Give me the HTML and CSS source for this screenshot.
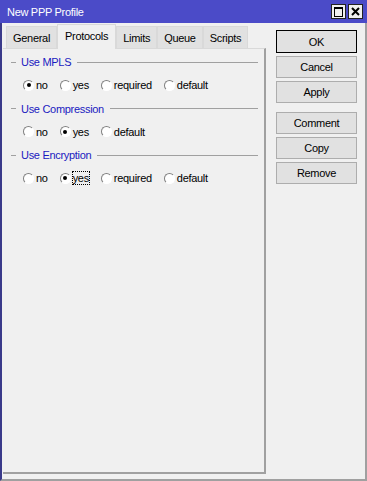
FILE: index.html
```html
<!DOCTYPE html>
<html lang="en">
<head>
<meta charset="UTF-8" />
<title>New PPP Profile</title>
<link rel="stylesheet" href="styles.css">
</head>
<body>
  <div class="window">
    <div class="titlebar">
      <span class="title">New PPP Profile</span>
      <div class="ctrls">
        <span class="ctrl"><span class="max-box"></span></span>
        <span class="ctrl">
          <svg width="9" height="9" viewBox="0 0 9 9"><path d="M1 1 L8 8 M8 1 L1 8" stroke="#000" stroke-width="2"/></svg>
        </span>
      </div>
    </div>

    <div class="content">
      <div class="main">
        <div class="tabs">
          <div class="tab">General</div>
          <div class="tab active">Protocols</div>
          <div class="tab">Limits</div>
          <div class="tab">Queue</div>
          <div class="tab">Scripts</div>
        </div>
        <div class="panel">
          <div class="group-head"><span class="dash"></span><span class="group-title">Use MPLS</span><span class="rule"></span></div>
          <div class="radios">
            <label class="radio"><span class="dot on"></span>no</label>
            <label class="radio"><span class="dot"></span>yes</label>
            <label class="radio"><span class="dot"></span>required</label>
            <label class="radio"><span class="dot"></span>default</label>
          </div>

          <div class="group-head"><span class="dash"></span><span class="group-title">Use Compression</span><span class="rule"></span></div>
          <div class="radios">
            <label class="radio"><span class="dot"></span>no</label>
            <label class="radio"><span class="dot on"></span>yes</label>
            <label class="radio"><span class="dot"></span>default</label>
          </div>

          <div class="group-head"><span class="dash"></span><span class="group-title">Use Encryption</span><span class="rule"></span></div>
          <div class="radios">
            <label class="radio"><span class="dot"></span>no</label>
            <label class="radio"><span class="dot on"></span><span class="focus">yes</span></label>
            <label class="radio"><span class="dot"></span>required</label>
            <label class="radio"><span class="dot"></span>default</label>
          </div>
        </div>
      </div>

      <div class="side">
        <button class="btn default">OK</button>
        <button class="btn">Cancel</button>
        <button class="btn">Apply</button>
        <button class="btn gap">Comment</button>
        <button class="btn">Copy</button>
        <button class="btn">Remove</button>
      </div>
    </div>
  </div>
</body>
</html>
```

FILE: styles.css
```css
body {
  margin: 0;
  font-family: 'Liberation Sans', Arial, sans-serif;
  font-size: 11px;
  letter-spacing: -0.3px;
  color: #000;
}
.window {
  width: 367px;
  height: 481px;
  box-sizing: border-box;
  background-color: #f0f0f0;
  border-left: 2px solid #3a3a8a;
  border-right: 2px solid #a0a0a0;
  border-bottom: 2px solid #a0a0a0;
  display: flex;
  flex-direction: column;
}
.titlebar {
  height: 23px;
  margin-left: -2px;
  margin-right: -2px;
  padding-left: 7px;
  padding-right: 4px;
  background-color: #4b4bc8;
  display: flex;
  align-items: center;
  justify-content: space-between;
}
.title {
  color: #fff;
  font-size: 11px;
}
.ctrls {
  display: flex;
  gap: 2px;
}
.ctrl {
  width: 13px;
  height: 13px;
  background-color: #f0f0f0;
  border: 1px solid #222;
  display: flex;
  align-items: center;
  justify-content: center;
}
.max-box {
  width: 7px;
  height: 7px;
  border: 1px solid #000;
  border-top-width: 2px;
}
.content {
  flex: 1;
  display: flex;
}
.main {
  width: 263px;
  display: flex;
  flex-direction: column;
  padding-left: 1px;
  padding-bottom: 5px;
}
.tabs {
  display: flex;
  padding-left: 3px;
  height: 25px;
  align-items: flex-end;
}
.tab {
  height: 22px;
  box-sizing: border-box;
  padding: 5px 6px 0 6px;
  background-color: #e1e1e1;
  border: 1px solid #d9d9d9;
  border-bottom: none;
}
.tab.active {
  height: 25px;
  padding: 5px 7px 0 7px;
  background-color: #f0f0f0;
  border-color: #d9d9d9;
  margin-bottom: -1px;
  position: relative;
  z-index: 1;
}
.panel {
  flex: 1;
  border-right: 2px solid #a0a0a0;
  border-bottom: 2px solid #a0a0a0;
  border-top: 1px solid #d9d9d9;
  padding: 4px 6px 0 6px;
}
.group-head {
  display: flex;
  align-items: center;
  height: 18px;
}
.dash {
  width: 5px;
  height: 1px;
  background-color: #a0a0a0;
  margin-right: 5px;
  margin-left: 2px;
}
.group-title {
  color: #1a1ac0;
  margin-right: 6px;
}
.rule {
  flex: 1;
  height: 1px;
  background-color: #a0a0a0;
}
.radios {
  display: flex;
  height: 28.5px;
  align-items: center;
  padding-left: 14px;
}
.radio {
  display: flex;
  align-items: center;
  gap: 2px;
  margin-right: 12px;
}
.dot {
  width: 11px;
  height: 11px;
  box-sizing: border-box;
  border-radius: 50%;
  border: 1px solid;
  border-color: #808080 #fff #fff #808080;
  background-color: #fff;
  display: flex;
  align-items: center;
  justify-content: center;
}
.dot.on::after {
  content: '';
  width: 4px;
  height: 4px;
  border-radius: 50%;
  background-color: #000;
}
.focus {
  outline: 1px dotted #000;
}
.side {
  flex: 1;
  display: flex;
  flex-direction: column;
  padding: 7px 8px 0 10px;
}
.btn {
  height: 22px;
  margin-bottom: 3px;
  font-family: 'Liberation Sans', Arial, sans-serif;
  font-size: 11px;
  letter-spacing: -0.3px;
  background-color: #e1e1e1;
  border: 1px solid #adadad;
  padding: 0;
}
.btn.default {
  border: 1px solid #000;
  height: 23px;
}
.btn.gap {
  margin-top: 6px;
}
```
